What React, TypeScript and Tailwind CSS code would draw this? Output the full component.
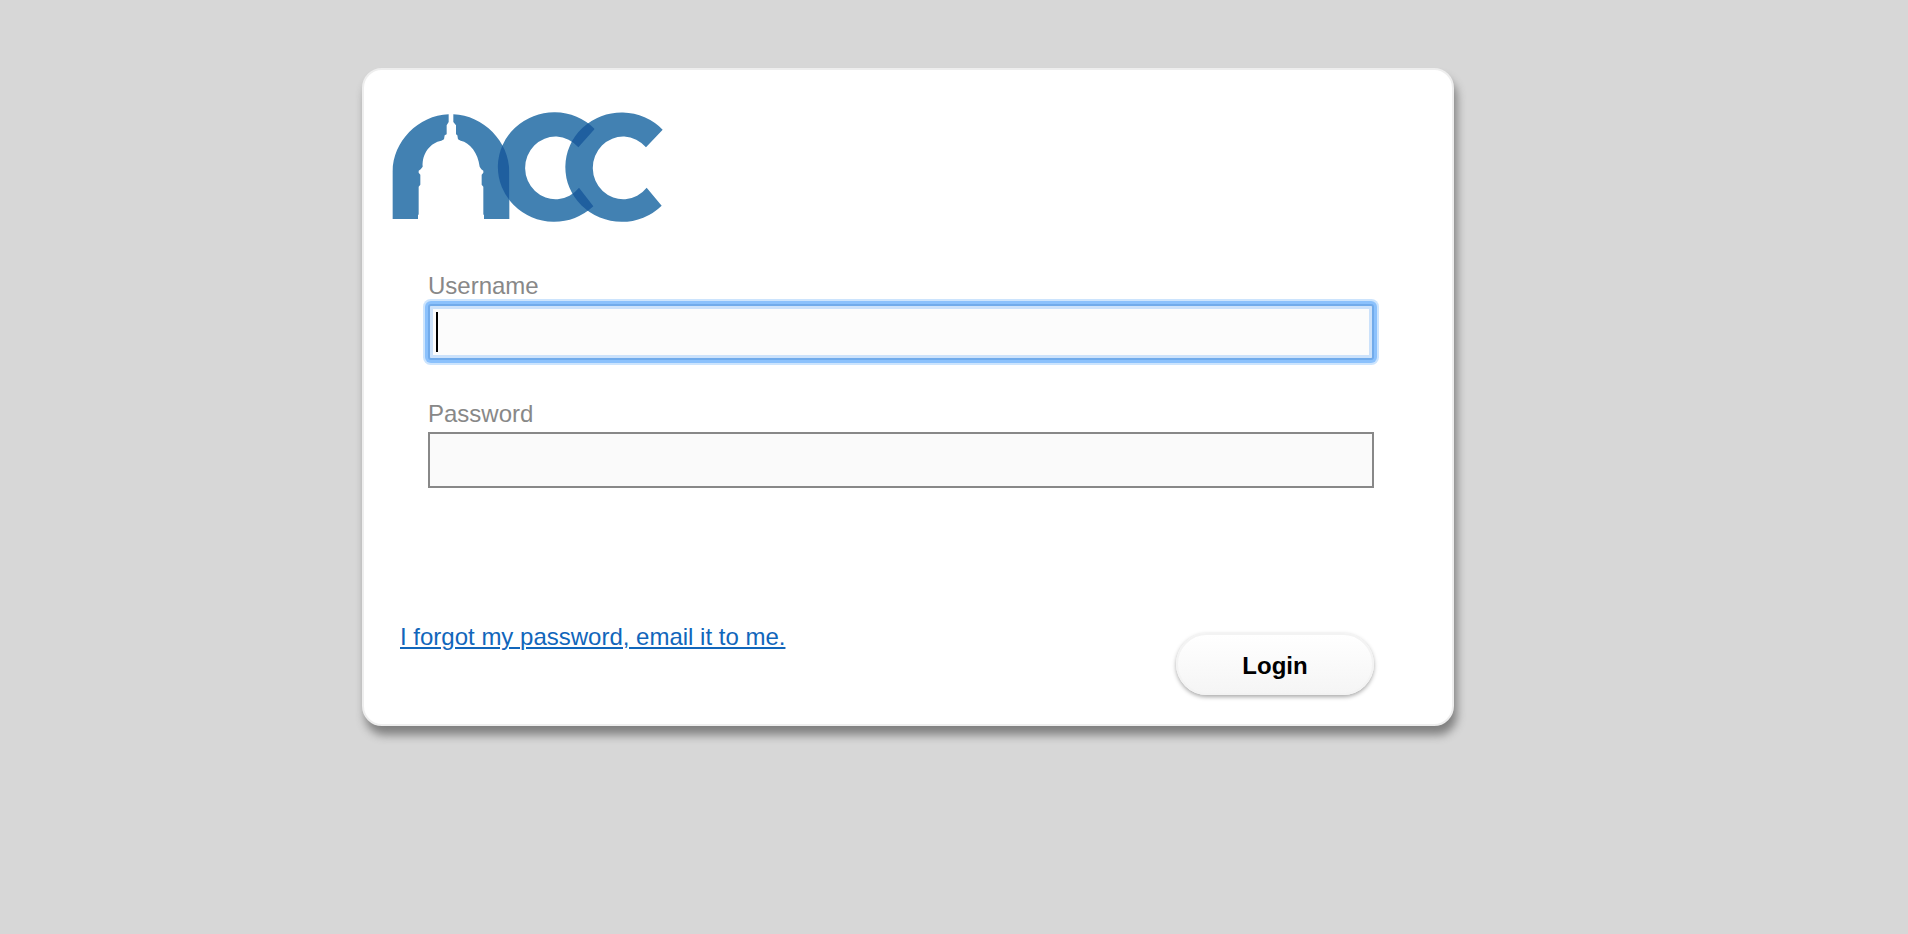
import React from "react";

const FIRST_C = "M644 87A169 164 0 1 0 640 319L597 263A91 94 0 1 1 595 142Z";
const SECOND_C = "M848 89A169 164 0 1 0 845 317L800 263A91 94 0 1 1 798 142Z";
const RIGHT_PILLAR =
  "M220 43C310 46 388 125 388 215V357H312V346L310 343V260L305 254V224L310 218V212L304 208L299 200C294 158 270 128 242 122L234 118L232 106L228 103V76L220 66Z";

function Logo() {
  return (
    <svg width="300" height="135" viewBox="0 0 900 405" role="img" aria-label="ncc" className="block">
      <defs>
        <clipPath id="arch">
          <path d={RIGHT_PILLAR} />
        </clipPath>
        <clipPath id="first-c">
          <path d={FIRST_C} />
        </clipPath>
      </defs>
      <g fill="#4281b2">
        <path d="M206 43C115 46 38 125 38 215V357H114V346L116 343V260L121 254V224L116 218V212L122 208L128 200C126 158 152 128 184 122L192 118L194 106L200 103V76L206 66Z" />
        <path d={RIGHT_PILLAR} />
        <path d={FIRST_C} />
        <path d={SECOND_C} />
      </g>
      <path clipPath="url(#arch)" fill="#1f5f9f" d={FIRST_C} />
      <path clipPath="url(#first-c)" fill="#1f5f9f" d={SECOND_C} />
    </svg>
  );
}

export default function App() {
  return (
    <main className="flex min-h-screen items-start justify-center bg-[#d7d7d7] pt-[68px] pr-[92px] font-['Liberation_Sans',Arial,sans-serif] text-2xl">
      <form
        className="w-full max-w-[1092px] rounded-[20px] border-2 border-[#eeeeee] bg-white pt-[30px] pr-[78px] pb-[29px] pl-4 shadow-[3px_9px_10px_#808080]"
        onSubmit={(e) => e.preventDefault()}
      >
        <Logo />
        <div className="pt-[33px] pl-12">
          <label htmlFor="username" className="block h-9 leading-9 text-[#888888]">Username</label>
          <div className="relative">
            <input
              id="username"
              type="text"
              autoComplete="off"
              className="block h-14 w-full rounded-[3px] border-2 border-[#71abeb] bg-[#fcfcfc] px-2 caret-transparent shadow-[0_0_0_3px_#8bc1fc,0_0_0_5px_#cce4fd,inset_0_0_0_3px_#cce2fb] outline-none"
            />
            <span aria-hidden="true" className="pointer-events-none absolute top-2 left-2 h-10 w-0.5 bg-black" />
          </div>
          <label htmlFor="password" className="mt-9 block h-9 leading-9 text-[#888888]">Password</label>
          <input
            id="password"
            type="password"
            className="block h-14 w-full border-2 border-[#888888] bg-[#fafafa] px-2 outline-none"
          />
        </div>
        <div className="mt-[133px] flex items-start justify-between pl-5">
          <a href="#forgot" className="leading-8 text-[#1166bb] underline decoration-2 underline-offset-2">
            I forgot my password, email it to me.
          </a>
          <button
            type="submit"
            className="mt-3 h-[62px] w-[198px] rounded-full border-2 border-[#f3f3f3] bg-linear-to-b from-white to-[#f5f5f5] pt-1 font-bold text-black shadow-[0_2px_4px_#a8a8a8]"
          >
            Login
          </button>
        </div>
      </form>
    </main>
  );
}
